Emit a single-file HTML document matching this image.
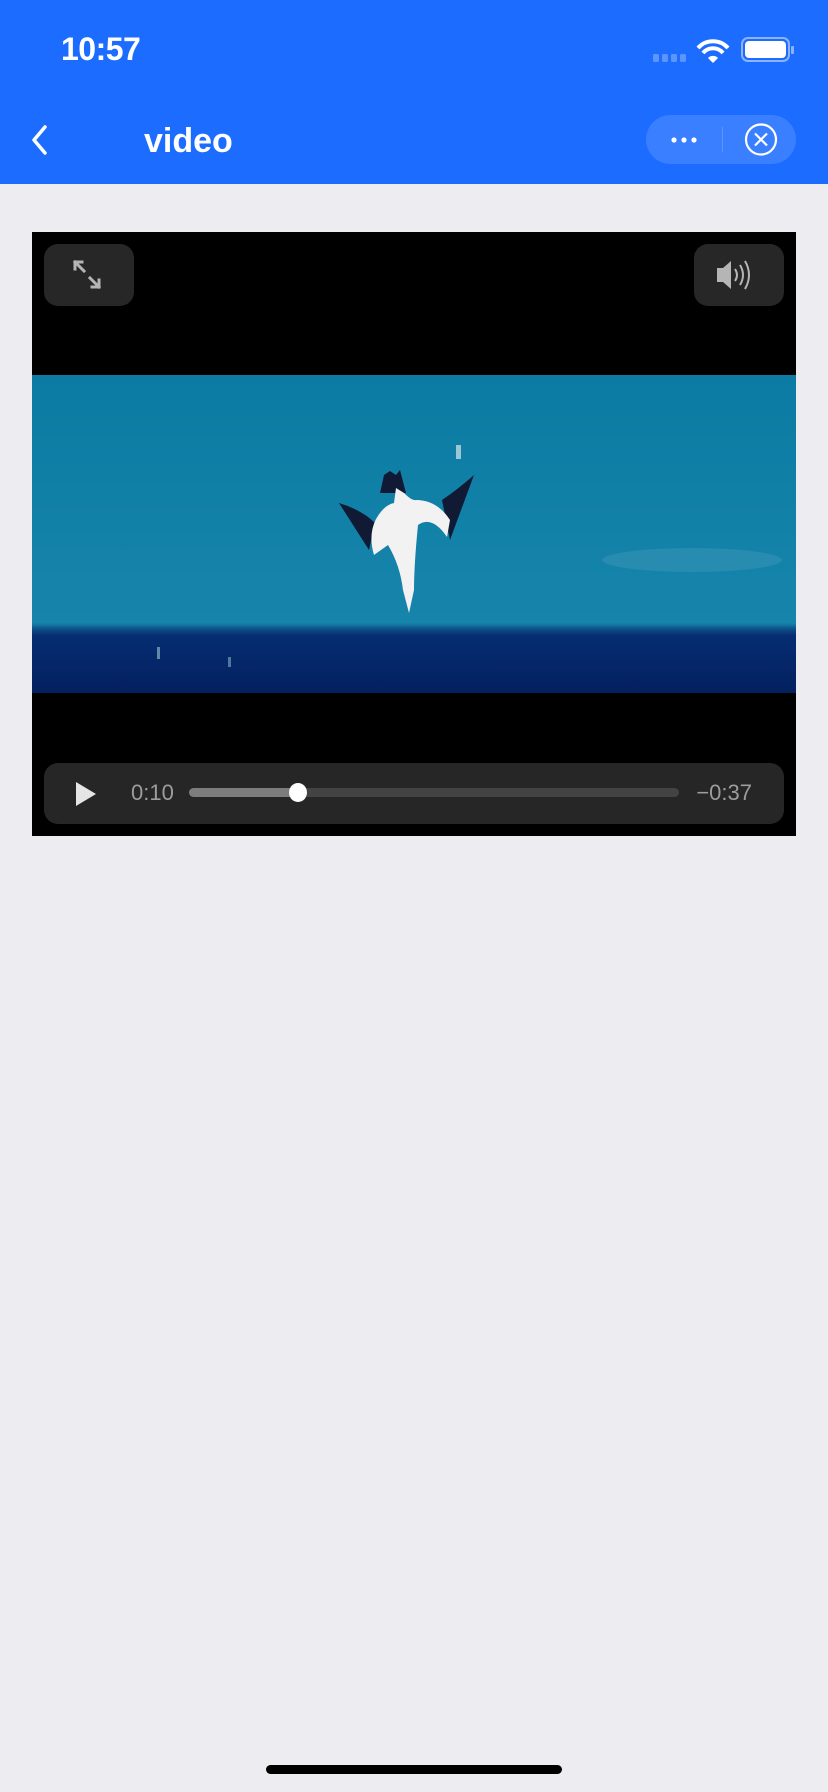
<!DOCTYPE html>
<html><head><meta charset="utf-8"><style>
*{margin:0;padding:0;box-sizing:border-box}
html,body{width:828px;height:1792px;overflow:hidden;background:#edecf1;font-family:"Liberation Sans",sans-serif}
.hdr{position:absolute;left:0;top:0;width:828px;height:184px;background:#1c6dff}
.time{position:absolute;left:61px;top:31px;color:#fff;font-size:32px;font-weight:bold;letter-spacing:-0.5px}
.title{position:absolute;left:144px;top:122px;color:#fff;font-size:34px;font-weight:bold}
.cap{position:absolute;left:646px;top:115px;width:150px;height:49px;border-radius:25px;background:#3a7fff}
.cap .sep{position:absolute;left:76px;top:12px;width:1px;height:25px;background:#5f95f5}
.video{position:absolute;left:32px;top:232px;width:764px;height:604px;background:#000;overflow:hidden}
.btn{position:absolute;top:12px;width:90px;height:62px;border-radius:14px;background:#272727}
.bar{position:absolute;left:12px;top:531px;width:740px;height:61px;border-radius:14px;background:#262626}
.t{position:absolute;top:17px;color:#9c9c9c;font-size:22px}
.home{position:absolute;left:266px;top:1765px;width:296px;height:9px;border-radius:5px;background:#000}
</style></head><body>
<div class="hdr">
<div class="time">10:57</div>
<svg style="position:absolute;left:650px;top:36px" width="150" height="30">
<rect x="3" y="18" width="6" height="8" rx="1.5" fill="#5d95ff"/><rect x="12" y="18" width="6" height="8" rx="1.5" fill="#5d95ff"/><rect x="21" y="18" width="6" height="8" rx="1.5" fill="#5d95ff"/><rect x="30" y="18" width="6" height="8" rx="1.5" fill="#5d95ff"/>
<path d="M48 12 A20 20 0 0 1 78 12" stroke="#fff" stroke-width="4" fill="none"/>
<path d="M53 17 A13 13 0 0 1 73 17" stroke="#fff" stroke-width="4" fill="none"/>
<path d="M58 22 L63 27 L68 22 A7 7 0 0 0 58 22Z" fill="#fff"/>
<rect x="92" y="2" width="47" height="23" rx="6" fill="none" stroke="#8cb3ff" stroke-width="2"/>
<rect x="95" y="5" width="41" height="17" rx="4" fill="#fff"/>
<rect x="141" y="10" width="3" height="8" rx="1" fill="#8cb3ff"/>
</svg>
<svg style="position:absolute;left:28px;top:124px" width="24" height="32"><path d="M17 3 L6 16 L17 29" stroke="#fff" stroke-width="3.5" fill="none" stroke-linecap="round" stroke-linejoin="round"/></svg>
<div class="title">video</div>
<div class="cap"><div class="sep"></div>
<svg style="position:absolute;left:0;top:0" width="150" height="49">
<circle cx="28" cy="25" r="2.6" fill="#fff"/><circle cx="38" cy="25" r="2.6" fill="#fff"/><circle cx="48" cy="25" r="2.6" fill="#fff"/>
<circle cx="115" cy="24.5" r="15" stroke="#fff" stroke-width="2.2" fill="none"/>
<path d="M109 18.5 L121 30.5 M121 18.5 L109 30.5" stroke="#fff" stroke-width="2.2"/>
</svg></div>
</div>
<div class="video">
<svg style="position:absolute;left:0;top:143px" width="764" height="318">
<defs><linearGradient id="g" x1="0" y1="0" x2="0" y2="1"><stop offset="0" stop-color="#0b7ba3"/><stop offset="0.78" stop-color="#1785ab"/><stop offset="0.8" stop-color="#0c4d86"/><stop offset="0.82" stop-color="#062d72"/><stop offset="1" stop-color="#04205f"/></linearGradient></defs>
<rect width="764" height="318" fill="url(#g)"/>
<ellipse cx="660" cy="185" rx="90" ry="12" fill="#3b94b8" opacity="0.5"/>
<path d="M307 128 L337 175 L343 148 Q330 135 307 128 Z" fill="#101a35"/>
<path d="M442 100 Q425 115 410 125 L418 165 Z" fill="#101a35"/>
<path d="M348 118 L352 100 L358 96 L364 100 L368 95 L374 118 Z" fill="#101a35"/>
<path d="M364 113 L372 118 Q380 126 384 125 Q405 125 418 145 L415 162 Q400 140 386 150 Q382 190 382 215 L377 238 L371 215 Q368 190 356 170 L342 180 Q336 160 344 144 Q352 130 362 128 Z" fill="#f2f2f2"/>
<rect x="424" y="70" width="5" height="14" fill="#c0d8e0" opacity="0.8"/>
<rect x="125" y="272" width="3" height="12" fill="#9cc" opacity="0.6"/>
<rect x="196" y="282" width="3" height="10" fill="#9cc" opacity="0.5"/>
</svg>
<div class="btn" style="left:12px"><svg width="90" height="62"><g stroke="#b5b5b5" stroke-width="3" fill="none" stroke-linecap="square"><path d="M31 18 L40 27 M31 18 L31 25 M31 18 L38 18 M55 43 L46 34 M55 43 L55 36 M55 43 L48 43"/></g></svg></div>
<div class="btn" style="left:662px"><svg width="90" height="62"><path d="M23 24 L29 24 L37 17 L37 45 L29 38 L23 38Z" fill="#b5b5b5"/><g stroke="#b5b5b5" stroke-width="2" fill="none"><path d="M41 25 Q45 31 41 37"/><path d="M46 21 Q52 31 46 41"/><path d="M51 17 Q59 31 51 45"/></g></svg></div>
<div class="bar">
<svg style="position:absolute;left:30px;top:17px" width="24" height="28"><path d="M2 2 L22 14 L2 26Z" fill="#e5e5e5"/></svg>
<div class="t" style="left:87px">0:10</div>
<div style="position:absolute;left:145px;top:25px;width:490px;height:9px;border-radius:5px;background:#434343"></div>
<div style="position:absolute;left:145px;top:25px;width:110px;height:9px;border-radius:5px;background:#7d7d7d"></div>
<div style="position:absolute;left:245px;top:20px;width:18px;height:19px;border-radius:50%;background:#fff"></div>
<div class="t" style="right:32px">−0:37</div>
</div>
</div>
<div class="home"></div>
</body></html>
